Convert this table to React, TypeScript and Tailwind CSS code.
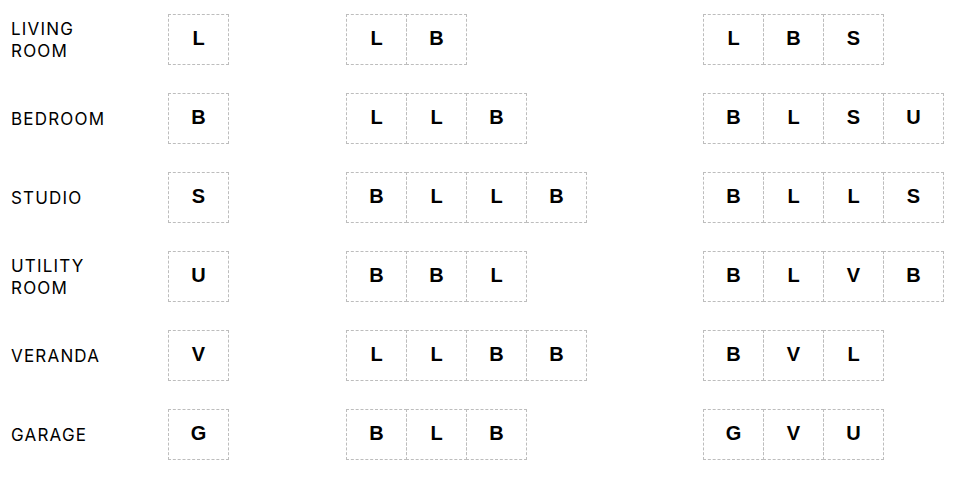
const rows: { label: string[]; a: string; b: string[]; c: string[] }[] = [
  { label: ["LIVING", "ROOM"], a: "L", b: ["L", "B"], c: ["L", "B", "S"] },
  { label: ["BEDROOM"], a: "B", b: ["L", "L", "B"], c: ["B", "L", "S", "U"] },
  { label: ["STUDIO"], a: "S", b: ["B", "L", "L", "B"], c: ["B", "L", "L", "S"] },
  { label: ["UTILITY", "ROOM"], a: "U", b: ["B", "B", "L"], c: ["B", "L", "V", "B"] },
  { label: ["VERANDA"], a: "V", b: ["L", "L", "B", "B"], c: ["B", "V", "L"] },
  { label: ["GARAGE"], a: "G", b: ["B", "L", "B"], c: ["G", "V", "U"] },
];

const Cell = ({ ch, first }: { ch: string; first?: boolean }) => (
  <div
    className={`w-[61px] h-[51px] border border-dashed border-[#bdbdbd] flex items-center justify-center pb-[3px] ${first ? "" : "-ml-px"}`}
  >
    <span className="text-[20px] font-bold text-black leading-none font-['Liberation_Sans',Arial,sans-serif]">
      {ch}
    </span>
  </div>
);

const Strip = ({ items }: { items: string[] }) => (
  <div className="flex">
    {items.map((ch, i) => (
      <Cell key={i} ch={ch} first={i === 0} />
    ))}
  </div>
);

export default function App() {
  return (
    <div className="w-[960px] h-[478px] bg-white pt-[14px]">
      <div className="flex flex-col gap-[28px]">
        {rows.map((r, i) => (
          <div key={i} className="grid grid-cols-[168px_178px_357px_1fr] items-center">
            <div className="pl-[11px] text-[17px] leading-[22px] tracking-[0.07em] text-black font-['Inter',sans-serif]">
              {r.label.map((l, j) => (
                <div key={j}>{l}</div>
              ))}
            </div>
            <Strip items={[r.a]} />
            <Strip items={r.b} />
            <Strip items={r.c} />
          </div>
        ))}
      </div>
    </div>
  );
}
